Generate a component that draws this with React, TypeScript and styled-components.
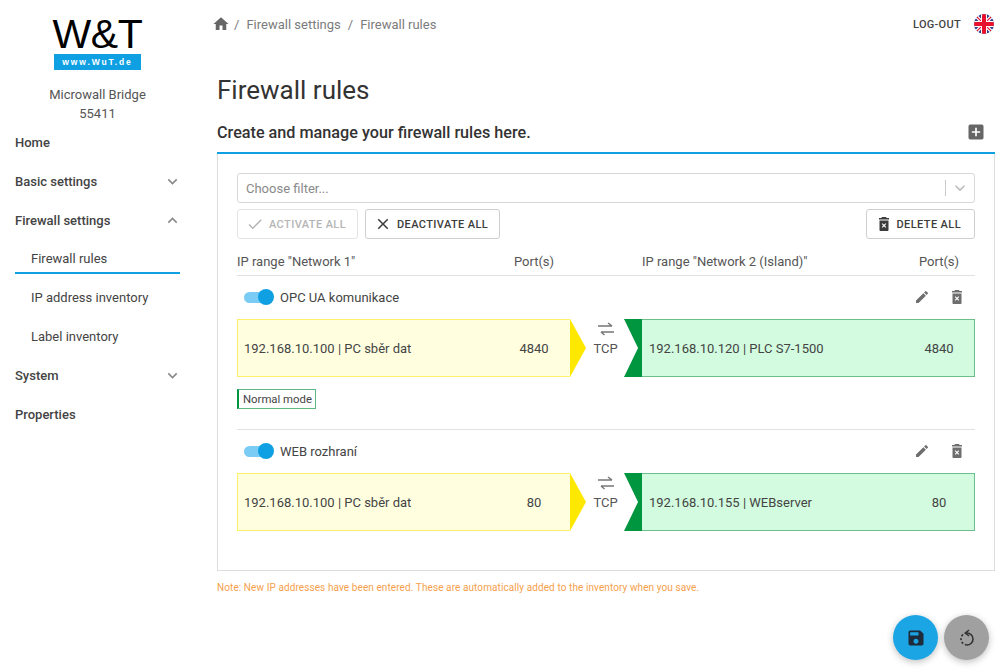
import React from 'react';
import styled, { createGlobalStyle } from 'styled-components';
import { MdHome, MdEdit, MdAddBox, MdSave, MdCheck, MdClose, MdExpandMore, MdExpandLess } from 'react-icons/md';

const GlobalStyle = createGlobalStyle`
  html, body { margin: 0; padding: 0; background: #fff; }
  body { font-family: Roboto, "Liberation Sans", sans-serif; color: #444; font-size: 13px; }
`;

const Page = styled.div`
  width: 1000px;
  height: 671px;
  display: flex;
  overflow: hidden;
`;

const Sidebar = styled.aside`
  width: 217px;
  flex: none;
  box-sizing: border-box;
  padding: 0 37px 0 15px;
`;

const Brand = styled.div`
  width: 165px;
  display: flex;
  flex-direction: column;
  align-items: center;
`;

const LogoText = styled.div`
  font-family: "Liberation Sans", Arial, sans-serif;
  font-size: 41px;
  line-height: 38px;
  margin-top: 15px;
  color: #000;
  letter-spacing: -0.3px;
`;

const LogoBar = styled.div`
  width: 87px;
  height: 16px;
  margin-top: 1px;
  background: #0f9fe3;
  color: #fff;
  font-family: "Liberation Sans", Arial, sans-serif;
  font-weight: 700;
  font-size: 8.5px;
  line-height: 16px;
  letter-spacing: 1.9px;
  text-align: center;
`;

const DeviceName = styled.div`
  margin-top: 15px;
  font-size: 13px;
  line-height: 19px;
  text-align: center;
  color: #555;
`;

const NavList = styled.nav`
  margin-top: 6px;
  display: flex;
  flex-direction: column;
`;

const NavItem = styled.div<{ $sub?: boolean; $active?: boolean }>`
  height: 29px;
  margin-bottom: 9.8px;
  box-sizing: border-box;
  display: flex;
  align-items: center;
  justify-content: space-between;
  padding-left: ${p => (p.$sub ? '16px' : '0')};
  font-weight: ${p => (p.$sub ? 400 : 500)};
  font-size: 13px;
  color: #444;
  border-bottom: 2px solid ${p => (p.$active ? '#0f9fe3' : 'transparent')};
  svg { color: #888; margin-right: -2px; }
`;

const Main = styled.main`
  width: 778px;
  flex: none;
  display: flex;
  flex-direction: column;
`;

const TopBar = styled.header`
  height: 48px;
  display: flex;
  align-items: center;
  justify-content: space-between;
`;

const Crumbs = styled.div`
  display: flex;
  align-items: center;
  gap: 7px;
  font-size: 13px;
  color: #7c7c7c;
  svg { color: #666; margin: 0 -3px 0 -5px; }
`;

const TopRight = styled.div`
  display: flex;
  align-items: center;
  gap: 13px;
  font-size: 11px;
  font-weight: 500;
  letter-spacing: 0.3px;
  color: #444;
  margin-right: 1px;
`;

const Title = styled.h1`
  margin: 26px 0 0;
  font-weight: 400;
  font-size: 26px;
  line-height: 32px;
  color: #333;
`;

const SubHead = styled.div`
  height: 38px;
  margin-top: 10px;
  box-sizing: border-box;
  padding-bottom: 4px;
  display: flex;
  align-items: center;
  justify-content: space-between;
  border-bottom: 2px solid #0f9fe3;
  font-size: 16.2px;
  font-weight: 500;
  color: #333;
  svg { color: #666; margin-right: 9px; }
`;

const Panel = styled.section`
  height: 417px;
  box-sizing: border-box;
  padding: 19px 19px 0;
  border: 1px solid #ddd;
  border-top: none;
`;

const FilterSelect = styled.div`
  height: 30px;
  box-sizing: border-box;
  border: 1px solid #d8d8d8;
  border-radius: 3px;
  display: flex;
  align-items: center;
  padding-left: 8px;
  color: #8a8a8a;
  font-size: 13px;
`;

const FilterText = styled.span`
  flex: 1;
`;

const FilterDivider = styled.span`
  width: 1px;
  height: 16px;
  background: #ccc;
`;

const FilterArrow = styled.span`
  width: 28px;
  display: flex;
  justify-content: center;
  color: #bbb;
`;

const ButtonRow = styled.div`
  margin-top: 6px;
  display: flex;
  gap: 7px;
`;

const ActionButton = styled.button<{ $disabled?: boolean; $right?: boolean }>`
  height: 30px;
  box-sizing: border-box;
  display: flex;
  align-items: center;
  gap: 5px;
  padding: ${p => (p.$right ? '0 13px 0 9px' : '0 11px 0 8px')};
  margin-left: ${p => (p.$right ? 'auto' : '0')};
  background: #fff;
  border: 1px solid ${p => (p.$disabled ? '#e4e4e4' : '#cfcfcf')};
  border-radius: 3px;
  font-family: inherit;
  font-size: 11px;
  font-weight: 500;
  letter-spacing: 0.4px;
  color: ${p => (p.$disabled ? '#b5b5b5' : '#3c3c3c')};
`;

const ColumnGrid = styled.div`
  display: grid;
  grid-template-columns: 261px 72px 72px 261px 72px;
  height: 37px;
  box-sizing: border-box;
  padding-top: 9px;
  align-items: center;
  border-bottom: 1px solid #e2e2e2;
  font-size: 13px;
  color: #555;
`;

const ColumnPort = styled.span`
  text-align: center;
`;

const RuleHead = styled.div`
  height: 43px;
  box-sizing: border-box;
  padding: 0 0 1px 7px;
  display: flex;
  align-items: center;
  font-size: 13px;
  color: #444;
`;

const ToggleTrack = styled.span`
  position: relative;
  width: 29px;
  height: 11px;
  margin-right: 7px;
  border-radius: 6px;
  background: #7accf5;
  flex: none;
`;

const ToggleKnob = styled.span`
  position: absolute;
  right: -1px;
  top: -2.5px;
  width: 16px;
  height: 16px;
  border-radius: 50%;
  background: #0f9fe3;
`;

const RuleName = styled.span`
  flex: 1;
`;

const RuleTools = styled.div`
  display: flex;
  align-items: center;
  gap: 19px;
  margin-right: 10px;
  color: #6e6e6e;
`;

const RuleLine = styled.div`
  display: grid;
  grid-template-columns: 333px 16px 38px 18px 1fr;
  height: 58px;
`;

const SourceBox = styled.div`
  display: grid;
  grid-template-columns: 1fr 72px;
  align-items: center;
  box-sizing: border-box;
  padding-left: 6px;
  background: #ffffe0;
  border: 1px solid #fff06a;
  border-right: none;
  color: #444;
`;

const PortText = styled.span`
  text-align: center;
`;

const SourceArrow = styled.div`
  background: #ffe800;
  clip-path: polygon(0 0, 100% 50%, 0 100%);
`;

const Protocol = styled.div`
  display: flex;
  flex-direction: column;
  align-items: center;
  gap: 5px;
  padding: 3px 0 0 1px;
  color: #555;
  font-size: 13px;
  line-height: 16px;
  svg { color: #777; }
`;

const TargetArrow = styled.div`
  background: #009640;
  clip-path: polygon(0 0, 100% 0, 100% 100%, 0 100%, 78% 50%);
`;

const TargetBox = styled.div`
  display: grid;
  grid-template-columns: 1fr 70px;
  align-items: center;
  box-sizing: border-box;
  padding-left: 7px;
  background: #d2fbdf;
  border: 1px solid #6cbf8c;
  border-left: none;
  color: #444;
`;

const ModeTag = styled.div`
  width: fit-content;
  height: 20px;
  margin-top: 12px;
  box-sizing: border-box;
  padding: 0 3px 0 4px;
  display: flex;
  align-items: center;
  border: 1px solid #5fb883;
  border-left: 2px solid #009640;
  font-size: 11.35px;
  color: #444;
`;

const RuleDivider = styled.div`
  height: 1px;
  margin-top: 20px;
  background: #e2e2e2;
`;

const Note = styled.p`
  margin: 11px 0 0;
  font-size: 10px;
  line-height: 12px;
  letter-spacing: 0.09px;
  color: #f5a04c;
`;

const Fabs = styled.div`
  position: fixed;
  left: 893px;
  top: 615px;
  display: flex;
  gap: 6px;
`;

const Fab = styled.button<{ $bg: string }>`
  width: 45px;
  height: 45px;
  padding: 0;
  border: none;
  border-radius: 50%;
  display: flex;
  align-items: center;
  justify-content: center;
  background: ${p => p.$bg};
  color: #1d2b3a;
  box-shadow: 0 2px 7px rgba(0, 0, 0, 0.25);
`;

// trash can with a cross cut out
const TrashIcon = () => (
  <svg width="16" height="16" viewBox="0 0 16 16" fill="currentColor">
    <path fillRule="evenodd" d="M6 1h4l.6 1H13v1.500H3V2h2.400zM3.500 4.500h9V14c0 .6-.5 1-1 1h-7c-.5 0-1-.4-1-1zM6.600 7.300l-.8.8L7.200 9.500 5.800 10.900l.8.8L8 10.300l1.400 1.400.8-.8L8.800 9.500l1.400-1.400-.8-.8L8 8.700z" />
  </svg>
);

const SwapIcon = () => (
  <svg width="16" height="14" viewBox="0 0 16 14" fill="none" stroke="currentColor" strokeWidth="1.5">
    <path d="M0 4h14M10 1l4 3" />
    <path d="M16 10H3M3 10l3.500 3" />
  </svg>
);

const ResetIcon = () => (
  <svg width="16" height="18" viewBox="0 0 16 18" fill="none" stroke="#333" strokeWidth="1.6">
    <path d="M8 4a6 6 0 0 1 0 12" />
    <path d="M8 16A6 6 0 0 1 8 4" strokeDasharray="2.200 1.800" />
    <path d="M10 1 6.500 4 10 7" />
  </svg>
);

const UkFlag = () => (
  <svg width="20" height="20" viewBox="0 0 20 20">
    <defs>
      <clipPath id="flagClip">
        <circle cx="10" cy="10" r="10" />
      </clipPath>
    </defs>
    <g clipPath="url(#flagClip)">
      <rect width="20" height="20" fill="#2b3f87" />
      <path d="M0 0 20 20M20 0 0 20" stroke="#fff" strokeWidth="3.500" />
      <path d="M0 0 20 20M20 0 0 20" stroke="#e8112d" strokeWidth="1.200" />
      <path d="M7 0h6v7h7v6h-7v7H7v-7H0V7h7z" fill="#fff" />
      <path d="M8 0h4v8h8v4h-8v8H8v-8H0V8h8z" fill="#e8112d" />
    </g>
  </svg>
);

const navItems = [
  { label: 'Home' },
  { label: 'Basic settings', caret: 'down' },
  { label: 'Firewall settings', caret: 'up' },
  { label: 'Firewall rules', sub: true, active: true },
  { label: 'IP address inventory', sub: true },
  { label: 'Label inventory', sub: true },
  { label: 'System', caret: 'down' },
  { label: 'Properties' },
];

const rules = [
  { name: 'OPC UA komunikace', source: '192.168.10.100 | PC sběr dat', target: '192.168.10.120 | PLC S7-1500', port: '4840', mode: 'Normal mode' },
  { name: 'WEB rozhraní', source: '192.168.10.100 | PC sběr dat', target: '192.168.10.155 | WEBserver', port: '80' },
];

export default function App() {
  return (
    <Page>
      <GlobalStyle />
      <Sidebar>
        <Brand>
          <LogoText>W&amp;T</LogoText>
          <LogoBar>www.WuT.de</LogoBar>
          <DeviceName>Microwall Bridge<br />55411</DeviceName>
        </Brand>
        <NavList>
          {navItems.map(item => (
            <NavItem key={item.label} $sub={item.sub} $active={item.active}>
              {item.label}
              {item.caret === 'down' && <MdExpandMore size={19} />}
              {item.caret === 'up' && <MdExpandLess size={19} />}
            </NavItem>
          ))}
        </NavList>
      </Sidebar>
      <Main>
        <TopBar>
          <Crumbs>
            <MdHome size={18} />
            <span>/</span>
            <span>Firewall settings</span>
            <span>/</span>
            <span>Firewall rules</span>
          </Crumbs>
          <TopRight>
            LOG-OUT
            <UkFlag />
          </TopRight>
        </TopBar>
        <Title>Firewall rules</Title>
        <SubHead>
          Create and manage your firewall rules here.
          <MdAddBox size={20} />
        </SubHead>
        <Panel>
          <FilterSelect>
            <FilterText>Choose filter...</FilterText>
            <FilterDivider />
            <FilterArrow><MdExpandMore size={20} /></FilterArrow>
          </FilterSelect>
          <ButtonRow>
            <ActionButton $disabled><MdCheck size={18} />ACTIVATE ALL</ActionButton>
            <ActionButton><MdClose size={18} />DEACTIVATE ALL</ActionButton>
            <ActionButton $right><TrashIcon />DELETE ALL</ActionButton>
          </ButtonRow>
          <ColumnGrid>
            <span>IP range "Network 1"</span>
            <ColumnPort>Port(s)</ColumnPort>
            <span />
            <span>IP range "Network 2 (Island)"</span>
            <ColumnPort>Port(s)</ColumnPort>
          </ColumnGrid>
          {rules.map((rule, i) => (
            <React.Fragment key={rule.name}>
              <RuleHead>
                <ToggleTrack><ToggleKnob /></ToggleTrack>
                <RuleName>{rule.name}</RuleName>
                <RuleTools>
                  <MdEdit size={16} />
                  <TrashIcon />
                </RuleTools>
              </RuleHead>
              <RuleLine>
                <SourceBox>
                  <span>{rule.source}</span>
                  <PortText>{rule.port}</PortText>
                </SourceBox>
                <SourceArrow />
                <Protocol><SwapIcon />TCP</Protocol>
                <TargetArrow />
                <TargetBox>
                  <span>{rule.target}</span>
                  <PortText>{rule.port}</PortText>
                </TargetBox>
              </RuleLine>
              {rule.mode && <ModeTag>{rule.mode}</ModeTag>}
              {i === 0 && <RuleDivider />}
            </React.Fragment>
          ))}
        </Panel>
        <Note>Note: New IP addresses have been entered. These are automatically added to the inventory when you save.</Note>
      </Main>
      <Fabs>
        <Fab $bg="#1ba5e5"><MdSave size={20} /></Fab>
        <Fab $bg="#a0a0a0"><ResetIcon /></Fab>
      </Fabs>
    </Page>
  );
}
